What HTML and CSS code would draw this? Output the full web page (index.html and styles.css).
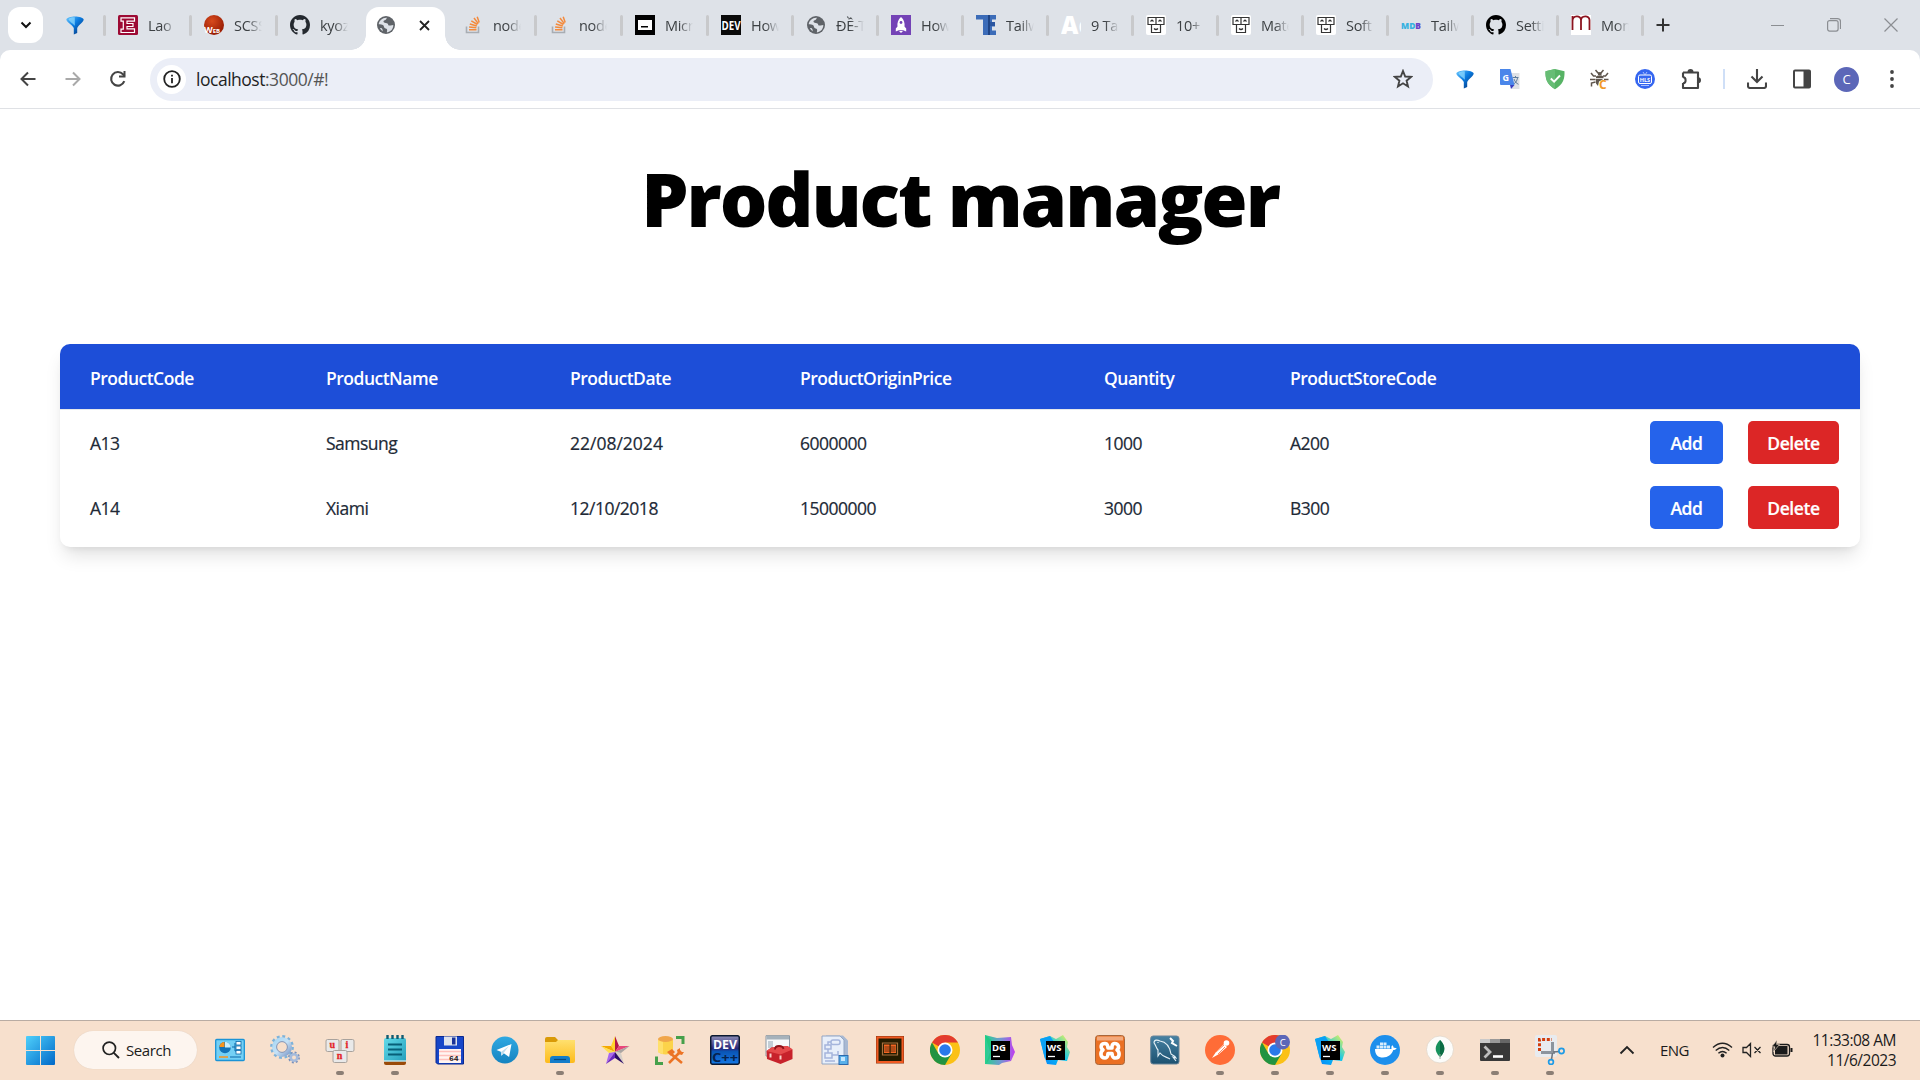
FILE: index.html
```html
<!DOCTYPE html>
<html lang="en">
<head>
<meta charset="utf-8">
<title>Product manager</title>
<link rel="stylesheet" href="styles.css">
</head>
<body>
<svg class="defs" aria-hidden="true">
  <defs>
    <linearGradient id="blueV" x1="0" y1="0" x2="1" y2="1"><stop offset="0" stop-color="#6cc8ff"/><stop offset=".45" stop-color="#0a7be0"/><stop offset="1" stop-color="#062a6c"/></linearGradient>
    <linearGradient id="win" gradientUnits="userSpaceOnUse" x1="0" y1="0" x2="29" y2="29"><stop offset="0" stop-color="#4fd0fb"/><stop offset="1" stop-color="#0068c8"/></linearGradient>
    <linearGradient id="folder" x1="0" y1="0" x2="0" y2="1"><stop offset="0" stop-color="#ffe06e"/><stop offset="1" stop-color="#fdbb1c"/></linearGradient>
    <linearGradient id="tg" x1="0" y1="0" x2="0" y2="1"><stop offset="0" stop-color="#2fa9e2"/><stop offset="1" stop-color="#1583c0"/></linearGradient>
    <linearGradient id="dg" x1="0" y1="0" x2="1" y2="0"><stop offset="0" stop-color="#24d28b"/><stop offset=".5" stop-color="#6f9bd0"/><stop offset="1" stop-color="#c13df0"/></linearGradient>
    <linearGradient id="wsg" x1="0" y1="1" x2="1" y2="0"><stop offset="0" stop-color="#087cfa"/><stop offset=".5" stop-color="#07c3f2"/><stop offset="1" stop-color="#fcf84a"/></linearGradient>
    <linearGradient id="devg" x1="0" y1="0" x2="0" y2="1"><stop offset="0" stop-color="#8f8fb8"/><stop offset=".45" stop-color="#28287a"/><stop offset=".55" stop-color="#0a55b5"/><stop offset="1" stop-color="#1579e6"/></linearGradient>
    <linearGradient id="gear" x1="0" y1="0" x2="1" y2="1"><stop offset="0" stop-color="#a9d7f3"/><stop offset=".5" stop-color="#c5e2f7"/><stop offset="1" stop-color="#829cc9"/></linearGradient>
    <linearGradient id="note" x1="0" y1="0" x2="1" y2="1"><stop offset="0" stop-color="#63dbe9"/><stop offset="1" stop-color="#229cba"/></linearGradient>
    <linearGradient id="sql" x1="0" y1="0" x2="0" y2="1"><stop offset="0" stop-color="#4782a3"/><stop offset="1" stop-color="#1c5170"/></linearGradient>
    <radialGradient id="redball" cx=".4" cy=".3" r=".8"><stop offset="0" stop-color="#d84a1c"/><stop offset="1" stop-color="#8c1400"/></radialGradient>
    <symbol id="funnel" viewBox="0 0 18 20"><path d="M.3 4.500C1.500.4 16.500.4 17.700 4.500c-.3 2.800-4.700 5-6.500 8.500V18l-3.400 1.500V13C6 9.500.6 7.300.3 4.500z" fill="url(#blueV)"/><path d="M2.500 4c1.500-1.800 4.500-2 6.300-1.700v8.500C7 8.300 3 6.500 2.500 4z" fill="#8ed9ff" opacity=".75"/></symbol>
    <symbol id="globe" viewBox="0 0 20 20"><circle cx="10" cy="10" r="9" fill="#5f6368"/><path d="M11 2.700c-1 1-.3 1.700-1.700 2.300-.8.400-1.600.3-1.800 1.300-.1.900.9 1.600 2.200 1.600 1.800 0 2.200.8 2.500 1.800.3.900 1.300 1 2.400.8l2.700-.4c.2 3.600-2.600 7-6.400 7.300 0-1.400.5-2.400.1-3.200-.5-1-1.900-.7-2.600-1.500-.7-.7-.3-1.700-1.200-2.400C6.200 9.500 4.300 9.400 2.700 9.300 3 5.500 6.800 2.200 11 2.700zM4 13.200c1.300-.3 2 .1 2.400 1 .3.900.2 1.500.7 2.200C5.700 15.700 4.700 14.600 4 13.200z" fill="#dee2e8"/></symbol>
    <symbol id="github" viewBox="0 0 16 16"><path d="M8 0C3.580 0 0 3.580 0 8c0 3.540 2.290 6.530 5.470 7.590.4.070.55-.17.55-.38 0-.19-.01-.82-.01-1.490-2.010.37-2.530-.49-2.690-.94-.09-.23-.48-.94-.82-1.130-.28-.15-.68-.52-.01-.53.63-.01 1.080.58 1.230.82.72 1.210 1.870.87 2.330.66.07-.52.28-.87.51-1.070-1.780-.2-3.640-.89-3.640-3.950 0-.87.31-1.590.82-2.150-.08-.2-.36-1.020.08-2.120 0 0 .67-.21 2.200.82.640-.18 1.320-.27 2-.27s1.360.09 2 .27c1.530-1.040 2.200-.82 2.200-.82.44 1.100.16 1.920.08 2.120.51.56.82 1.270.82 2.150 0 3.070-1.870 3.750-3.650 3.950.29.25.54.73.54 1.480 0 1.070-.01 1.930-.01 2.200 0 .21.15.46.55.38A8.010 8.010 0 0 0 16 8c0-4.420-3.580-8-8-8z" fill="currentColor"/></symbol>
    <symbol id="stack" viewBox="0 0 20 20"><path d="M3.500 11.500v6h12v-6" fill="none" stroke="#a8adb3" stroke-width="1.600"/><path d="M6 14.800h7.500M6.100 12l7.300.8M6.800 9l7 2M8.300 5.800l6.200 3.700M11 3l4.300 5.600M14.200 1.800l2 5.600" stroke="#f48a3c" stroke-width="1.500"/></symbol>
    <symbol id="robot" viewBox="0 0 20 20"><rect width="20" height="20" rx="2" fill="#fff"/><g fill="none" stroke="#333" stroke-width="1.200"><path d="M2 2.500h8v7H2zM10 2.500h8v7h-8zM5.500 9.500h9v8h-9z"/><path d="M4.500 6.500l1.500-1.500 1.500 1.500M12.500 6.500l1.500-1.500 1.500 1.500M8 13.500q2 2 4 0"/></g></symbol>
    <symbol id="chrome" viewBox="0 0 30 30"><circle cx="15" cy="15" r="15" fill="#fbc116"/><path d="M15 15L2 7.500A15 15 0 0 1 28 7.500H15z" fill="#e33b2e"/><path d="M2 7.500A15 15 0 0 0 15 30l6.500-11.300L8.500 18.700z" fill="#229342"/><circle cx="15" cy="15" r="7.500" fill="#fff"/><circle cx="15" cy="15" r="5.800" fill="#2a79ea"/></symbol>
    <symbol id="webstorm" viewBox="0 0 30 30"><path d="M0 4l10-3 6 3 7-4 5 7-1 5 3 5-3 9-9-1-2 5-9-1-3-9z" fill="url(#wsg)"/><path d="M0 4l10-3 4 6-9 17z" fill="#0aa0f5"/><rect x="6" y="6" width="19" height="19" fill="#000"/><text x="7" y="15.500" class="ide">WS</text><path d="M8 21.500h7" stroke="#fff" stroke-width="1.300"/></symbol>
  </defs>
</svg>

<header class="tabstrip">
  <button class="tab-search"><svg width="12" height="8" viewBox="0 0 12 8"><path d="M1.500 1.500L6 6l4.500-4.500" fill="none" stroke="#111" stroke-width="2"/></svg></button>
  <div class="tab pinned"><svg width="18" height="20"><use href="#funnel"/></svg></div>
  <div class="tab"><svg width="20" height="20" viewBox="0 0 20 20"><rect width="20" height="20" rx="1.500" fill="#9d0b34"/><path d="M3 2.800h13.500v3.400H9v2.300h6v3H9v2.300h7.500v3.700H3v-3.300h2.300V6.200H3z" fill="none" stroke="#fff" stroke-width="1.200"/></svg><span class="title">Lao</span></div>
  <div class="tab"><svg width="20" height="20" viewBox="0 0 20 20"><circle cx="10" cy="10" r="10" fill="url(#redball)"/><text x="0" y="18" class="fav-web">W<tspan font-size="6">EB</tspan></text></svg><span class="title">SCSS</span></div>
  <div class="tab last-before"><svg class="gh-dark" width="20" height="20"><use href="#github"/></svg><span class="title">kyoz</span></div>
  <div class="tab active"><svg width="20" height="20"><use href="#globe"/></svg><svg width="11" height="11" viewBox="0 0 11 11"><path d="M1 1l9 9M10 1l-9 9" stroke="#222" stroke-width="1.800"/></svg></div>
  <div class="tab after-active"><svg width="20" height="20"><use href="#stack"/></svg><span class="title">node</span></div>
  <div class="tab"><svg width="20" height="20"><use href="#stack"/></svg><span class="title">node</span></div>
  <div class="tab"><svg width="20" height="20" viewBox="0 0 20 20"><path fill="#000" d="M0 0h20v20H0z"/><path fill="#fff" d="M3 5h14v10H3z"/><path fill="#000" d="M6 11h7v1.500H6z"/></svg><span class="title">Micr</span></div>
  <div class="tab narrow"><svg width="20" height="20" viewBox="0 0 20 20"><path fill="#0a0a0a" d="M0 0h20v20H0z"/><text x="0.500" y="14.500" class="fav-dev" textLength="19" lengthAdjust="spacingAndGlyphs">DEV</text></svg><span class="title">How</span></div>
  <div class="tab narrow"><svg width="20" height="20"><use href="#globe"/></svg><span class="title">ĐỀ-T</span></div>
  <div class="tab narrow"><svg width="20" height="20" viewBox="0 0 20 20"><path fill="#7443b6" d="M0 0h20v20H0z"/><path d="M10 2c3 2.500 4 6 3.500 9.500l1.700 2v3l-3-1.200H7.800l-3 1.200v-3l1.700-2C6 8 7 4.500 10 2zM8 16h4l-2 2z" fill="#fff"/><circle cx="10" cy="7.500" r="1.400" fill="#7443b6"/></svg><span class="title">How</span></div>
  <div class="tab narrow"><svg width="20" height="20" viewBox="0 0 20 20"><path d="M0 0h20v4.500h-4v3h3v4h-3v4h4V20H7V4.500H0z" fill="#3c6cb8"/><path d="M12 0h2v20h-2z" fill="#1f4586"/><path d="M14 7h5v4h-5z" fill="#2b56a0"/></svg><span class="title">Tailw</span></div>
  <div class="tab narrow"><svg width="20" height="20" viewBox="0 0 20 20"><text x="0" y="18.500" class="fav-a">Ac</text></svg><span class="title">9 Tai</span></div>
  <div class="tab narrow"><svg width="20" height="20"><use href="#robot"/></svg><span class="title">10+</span></div>
  <div class="tab narrow"><svg width="20" height="20"><use href="#robot"/></svg><span class="title">Mate</span></div>
  <div class="tab narrow"><svg width="20" height="20"><use href="#robot"/></svg><span class="title">Soft</span></div>
  <div class="tab narrow"><svg width="20" height="20" viewBox="0 0 20 20"><text x="0" y="13.500" class="fav-mdb" textLength="20" lengthAdjust="spacingAndGlyphs">MD<tspan fill="#6a42c8">B</tspan></text></svg><span class="title">Tailw</span></div>
  <div class="tab narrow"><svg width="20" height="20"><use href="#github"/></svg><span class="title">Setti</span></div>
  <div class="tab narrow"><svg width="20" height="20" viewBox="0 0 20 20"><path fill="#fff" d="M0 0h20v20H0z"/><path d="M1.500 15V1M1.500 6C1.500 0 10 0 10 5v10M10 5.500C10 0 18.500 0 18.500 5v10" fill="none" stroke="#8c1420" stroke-width="1.800"/></svg><span class="title">Mon</span></div>
  <svg class="new-tab" width="14" height="14" viewBox="0 0 14 14"><path d="M7 .5v13M.5 7h13" stroke="#333" stroke-width="2"/></svg>
  <div class="window-buttons">
    <svg width="14" height="14" viewBox="0 0 14 14"><path d="M1 7.500h13" stroke="#8b8e92"/></svg>
    <svg width="14" height="14" viewBox="0 0 14 14"><g fill="none" stroke="#8b8e92" stroke-width="1.200"><rect x=".6" y="2.600" width="10.500" height="10.500" rx="2"/><path d="M3 .7h7.500a3 3 0 0 1 3 3V11"/></g></svg>
    <svg width="14" height="14" viewBox="0 0 14 14"><path d="M.5.5l13 13M13.500.5l-13 13" stroke="#8b8e92" stroke-width="1.200"/></svg>
  </div>
</header>

<div class="toolbar-back">
<nav class="toolbar">
  <div class="nav-buttons">
    <svg width="20" height="20" viewBox="0 0 20 20"><path d="M17.500 10H4M10 3.500L3.500 10l6.500 6.500" fill="none" stroke="#444" stroke-width="2"/></svg>
    <svg width="20" height="20" viewBox="0 0 20 20"><path d="M2.500 10H16M10 3.500l6.500 6.500-6.500 6.500" fill="none" stroke="#a9a9a9" stroke-width="2"/></svg>
    <svg width="20" height="20" viewBox="0 0 20 20"><path d="M16.300 12.200A6.800 6.800 0 1 1 15 5.300l1.500 1.700" fill="none" stroke="#444" stroke-width="2.100"/><path d="M17.500 2v6.500H11V6.500h4.500V2z" fill="#444"/></svg>
  </div>
  <div class="omnibox">
    <span class="site-info"><svg width="18" height="18" viewBox="0 0 18 18"><circle cx="9" cy="9" r="7.800" fill="none" stroke="#222" stroke-width="1.800"/><path d="M8.100 8h1.800v5.200H8.100zM8.100 4.700h1.800v1.900H8.100z" fill="#222"/></svg></span>
    <span class="url"><b>localhost</b>:3000/#!</span>
    <svg class="star" width="20" height="20" viewBox="0 0 20 20"><path d="M10 2l2.200 5.500 5.900.4-4.500 3.800 1.400 5.800-5-3.200-5 3.200 1.400-5.800L1.900 7.900l5.900-.4z" fill="none" stroke="#444" stroke-width="1.900"/></svg>
  </div>
  <div class="extensions">
    <svg width="18" height="20"><use href="#funnel"/></svg>
    <svg width="22" height="22" viewBox="0 0 22 22"><path d="M9 5h11.500v16H13z" fill="#dfe1e5"/><path d="M13.500 9.500h6M16.500 8v1.500M14.500 16c2-1 3.500-3 4-6M15 11c1 3 2.500 4.300 4.500 5.300" stroke="#5f7d9c" fill="none"/><path d="M1 1h10.500l4 16H1.500L1 16z" fill="#4a86ea"/><path d="M11 17h4.500L12 21z" fill="#3a3fc0"/><text x="3.500" y="12.500" class="g-letter">G</text></svg>
    <svg width="20" height="22" viewBox="0 0 20 22"><path d="M10 1l9.500 2.300c.3 7-1 13-9.500 18C1.500 16.300.2 10.300.5 3.300z" fill="#57b365"/><path d="M10 1v20.300C1.500 16.300.2 10.300.5 3.300z" fill="#67bd75"/><path d="M5.800 10.500l3.300 3.200L15 7.500" fill="none" stroke="#fff" stroke-width="1.900"/></svg>
    <svg width="20" height="20" viewBox="0 0 20 20"><path d="M6 7.500q4-2.500 7.500 0v1.700H6zM5.800 10h7.500L9 12.500 8 17l-2-2.500z" fill="#5f564d"/><path d="M5.500 1l2.500 3h3l2.500-3M1 4l2.500 3H6M18 4l-2.500 3H13M0 10.500h5.500M1.500 17.500V14l4-1M18.500 10.500H14" fill="none" stroke="#5f564d" stroke-width="1.500"/><path d="M8 3.500h3.500V6H8z" fill="#5f564d"/><text x="9" y="19.700" class="c-letter">C</text></svg>
    <svg width="20" height="20" viewBox="0 0 20 20"><circle cx="10" cy="10" r="10" fill="#3566f0"/><rect x="3.500" y="6" width="13" height="8.500" rx="1.500" fill="none" stroke="#fff"/><path d="M8 3l2 3 2-3M6 16.500h8" fill="none" stroke="#c8d6ff" stroke-width=".8"/><text x="4.700" y="12.500" class="hls">HLS</text></svg>
    <svg width="22" height="22" viewBox="0 0 22 22"><path d="M3 4.500h15v5.500M18 14v6H3v-5M3 4.500v5" fill="none" stroke="#444" stroke-width="2.100" stroke-linejoin="round"/><path d="M3 9c3.500.5 3.500 6 0 6.500" fill="none" stroke="#444" stroke-width="2"/><path d="M7.500 4a3 3 0 0 1 6 0zM18 9.200a3 3 0 0 1 0 6z" fill="#444"/><path d="M18 9v6" stroke="#444" stroke-width="2.100"/></svg>
  </div>
  <span class="divider"></span>
  <div class="actions">
    <svg width="20" height="20" viewBox="0 0 20 20"><path d="M10 0v13M4.500 7.500L10 13l5.500-5.500M1 13.500V17q0 2 2 2h14q2 0 2-2v-3.500" fill="none" stroke="#444" stroke-width="2.100"/></svg>
    <svg width="20" height="20" viewBox="0 0 20 20"><rect x="2" y="1.500" width="16" height="17" rx="1" fill="none" stroke="#444" stroke-width="2"/><path d="M11.500 2h6.500v16.500h-6.500z" fill="#444"/></svg>
    <span class="avatar">C</span>
    <svg width="20" height="20" viewBox="0 0 20 20" fill="#444"><circle cx="10" cy="3" r="1.900"/><circle cx="10" cy="10" r="1.900"/><circle cx="10" cy="17" r="1.900"/></svg>
  </div>
</nav>
</div>

<main class="page">
  <h1>Product manager</h1>
  <section class="card">
    <div class="row head">
      <span>ProductCode</span><span>ProductName</span><span>ProductDate</span><span>ProductOriginPrice</span><span>Quantity</span><span>ProductStoreCode</span><span></span>
    </div>
    <div class="row">
      <span>A13</span><span>Samsung</span><span class="wide">22/08/2024</span><span>6000000</span><span>1000</span><span>A200</span>
      <div class="buttons"><button class="btn add">Add</button><button class="btn delete">Delete</button></div>
    </div>
    <div class="row">
      <span>A14</span><span>Xiami</span><span>12/10/2018</span><span>15000000</span><span>3000</span><span>B300</span>
      <div class="buttons"><button class="btn add">Add</button><button class="btn delete">Delete</button></div>
    </div>
  </section>
</main>

<footer class="taskbar">
  <svg class="start" width="29" height="29" viewBox="0 0 29 29"><path d="M0 1q0-1 1-1h13v14H0zM15 0h13q1 0 1 1v13H15zM0 15h14v14H1q-1 0-1-1zM15 15h14v13q0 1-1 1H15z" fill="url(#win)"/></svg>
  <div class="search"><svg width="18" height="18" viewBox="0 0 18 18"><circle cx="7.300" cy="7.300" r="6.200" fill="none" stroke="#222" stroke-width="1.700"/><path d="M11.800 11.800L17 17" stroke="#222" stroke-width="1.900"/></svg><span>Search</span></div>
  <div class="apps">
    <div class="app"><svg width="30" height="30" viewBox="0 0 30 30"><rect x=".7" y="4.500" width="28.600" height="21" rx="1" fill="#74d0f5" stroke="#1a93d6" stroke-width="1.300"/><circle cx="10" cy="12.500" r="5.800" fill="#1273b8"/><path d="M10 12.500V6.700a5.800 5.800 0 0 1 5.800 5.800z" fill="#c9efff"/><path d="M9.500 12V7a5 5 0 0 0-5 5z" fill="#f8941d"/><path d="M4 22h9" stroke="#f8941d" stroke-width="1.500"/><path d="M15 22h11M17 12h3M20 8v8h2" stroke="#0c68a9" fill="none"/><g fill="#fff" stroke="#0c68a9" stroke-width=".8"><rect x="21" y="6.500" width="5" height="3.500"/><rect x="21" y="11" width="5" height="3.500"/><rect x="21" y="15.500" width="5" height="3.500"/></g></svg></div>
    <div class="app"><svg width="30" height="30" viewBox="0 0 30 30"><circle cx="12" cy="12" r="7.800" fill="none" stroke="url(#gear)" stroke-width="4.500"/><circle cx="12" cy="12" r="10.800" fill="none" stroke="#7cb2da" stroke-width="2.200" stroke-dasharray="2.900 2.754"/><circle cx="12" cy="12" r="5.400" fill="none" stroke="#7f94b8"/><circle cx="24" cy="22.500" r="3.300" fill="none" stroke="#a6bbdc" stroke-width="2.600"/><circle cx="24" cy="22.500" r="5.200" fill="none" stroke="#7890bb" stroke-width="1.500" stroke-dasharray="2 2.084"/></svg></div>
    <div class="app open"><svg width="30" height="30" viewBox="0 0 30 30"><g fill="#e9e9e9" stroke="#a8a29d"><rect x="1" y="4.500" width="13" height="12" rx="1.500"/><rect x="16" y="4.500" width="13" height="12" rx="1.500"/><rect x="8" y="15.500" width="14" height="12" rx="1.500"/></g><g class="key"><text x="4.500" y="12.500">u</text><text x="20.500" y="12.500">i</text><text x="11.700" y="23.500">n</text></g></svg></div>
    <div class="app open"><svg width="30" height="30" viewBox="0 0 30 30"><rect x="4" y="3" width="22" height="25" rx="2" fill="url(#note)"/><path d="M4 26.500h22v1.500q0 2-2 2H6q-2 0-2-2z" fill="#9a4a08"/><path d="M4 26h22" stroke="#fff"/><path d="M8 9.500h14M8 14.500h14M8 19.500h14" stroke="#075f78" stroke-width="1.800"/><path d="M7.500 0v4M12.500 0v4M17.500 0v4M22.500 0v4" stroke="#115c72" stroke-width="2.400"/></svg></div>
    <div class="app"><svg width="30" height="30" viewBox="0 0 30 30"><path d="M1 1.500h27.500V29H2.500L1 27.500z" fill="#1746c8" stroke="#0a2890"/><path d="M9 1.500h13v9H9z" fill="#dfe3ec"/><path d="M17 2.500h3.500v7H17z" fill="#1a3298"/><path d="M4 14h22v14H4z" fill="#fff5f2"/><path d="M4 16.500h22M4 20.500h22M4 24.500h22" stroke="#ffc0bc" stroke-width="1.500"/><text x="14" y="26" class="sixty">64</text></svg></div>
    <div class="app"><svg width="30" height="30" viewBox="0 0 30 30"><circle cx="15" cy="15" r="13.500" fill="url(#tg)"/><path d="M6.500 15L21.500 9l-2.400 13-5.300-3.700-2.400 2.400-.6-4z" fill="#fff"/><path d="M11 17l8-6-5.500 7-2.100 2.700z" fill="#bfdcec"/></svg></div>
    <div class="app open"><svg width="30" height="30" viewBox="0 0 30 30"><path d="M0 4q0-2 2-2h8l3 3H30v6H0z" fill="#d99a07"/><path d="M0 7h11l2-2h17v21q0 2-2 2H2q-2 0-2-2z" fill="url(#folder)"/><path d="M5 28v-4q0-3 3-3h14q3 0 3 3v4z" fill="#147dca"/><path d="M9 24.500h12" stroke="#084b82" stroke-width="1.200"/></svg></div>
    <div class="app"><svg width="30" height="30" viewBox="0 0 30 30"><path d="M15 1v16L11 11z" fill="#ffd52b"/><path d="M15 1l4 10-4 6z" fill="#b31648"/><path d="M1 11h10l4 6z" fill="#f5a800"/><path d="M1 11l8 7 6-1z" fill="#ffe04b"/><path d="M19 11h10.500L15 17z" fill="#e8477a"/><path d="M29.500 11L21 18l-6-1z" fill="#aaa5a2"/><path d="M15 17l-6 1-3 11z" fill="#a866f0"/><path d="M6 29l9-6v-6z" fill="#6827bd"/><path d="M15 17l6 1 3 11z" fill="#d5cec6"/><path d="M15 17v6l9 6z" fill="#2a0b68"/></svg></div>
    <div class="app"><svg width="30" height="30" viewBox="0 0 30 30"><path d="M3 4v13q7.500 5 15 0V4z" fill="#fcd34a"/><path d="M3 4v13q2 2 5 2V4z" fill="#ffe06c"/><ellipse cx="10.500" cy="4" rx="7.500" ry="3" fill="#f0a64b"/><path d="M21 2.500h7V9M1.500 21.500v7H8" fill="none" stroke="#46a04b" stroke-width="3"/><path d="M14 28l12-12M15 18l12 10" stroke="#ec7426" stroke-width="2.600"/><path d="M12 17l5-3 3 3-4 4zM22 15l3-2v4h4l-2 3-4-1z" fill="#ec7426"/></svg></div>
    <div class="app"><svg width="30" height="30" viewBox="0 0 30 30"><rect x=".7" y=".7" width="28.600" height="28.600" rx="2" fill="url(#devg)" stroke="#0b1830" stroke-width="1.500"/><text x="3" y="14" class="dev1" textLength="24" lengthAdjust="spacingAndGlyphs">DEV</text><text x="2" y="26.500" class="dev2" textLength="26" lengthAdjust="spacingAndGlyphs">C++</text></svg></div>
    <div class="app"><svg width="30" height="30" viewBox="0 0 30 30"><path d="M1 .7h23.500V21H1z" fill="#f7f9fa" stroke="#8c98a2"/><path d="M1.500 1h22.500v3.500H1.500z" fill="#a6b2bb"/><path d="M3 6h5v7H3z" fill="#c3ced6"/><path d="M1.500 16l5-3.500 16-1.500 5 3.500v9.500l-12 5L2 24z" fill="#c7222b"/><path d="M1.500 16l14 3.500 12-5-5-3.500-16 1.500z" fill="#e54a4b"/><path d="M10 14.500q0-3.500 4-3.500t4.500 3" fill="none" stroke="#8e1219" stroke-width="1.800"/><path d="M5.500 18.500v4M15.500 20.500v4" stroke="#f7d0c8" stroke-width="2"/></svg></div>
    <div class="app"><svg width="30" height="30" viewBox="0 0 30 30"><path d="M6 .5h17l5 5V27H6z" fill="#a9b9d2"/><path d="M2 1h18l4 4v24H2z" fill="#e8effa" stroke="#93a6c4"/><g fill="none" stroke="#a5b5dc" stroke-width="1.500"><rect x="11" y="5" width="9" height="4.500" rx="2"/><rect x="5" y="10" width="6" height="4"/><rect x="5" y="18" width="7" height="5"/><path d="M11 7H8v3M8 14v4M12 20h6v-4M5 26h10"/></g><rect x="19" y="20.500" width="9" height="9" fill="#58b0ea" stroke="#2a69ad"/><path d="M21 22h4v4h-4z" fill="#c5e7ff"/></svg></div>
    <div class="app"><svg width="30" height="30" viewBox="0 0 30 30"><rect x="1" y="1" width="28" height="27.500" fill="#8a3311"/><rect x="2.500" y="2.500" width="25" height="24.500" fill="#251c00" stroke="#f15a22" stroke-width="2"/><path d="M7.500 8h15v12h-15z" fill="none" stroke="#a8713e" stroke-width="1.200"/><path d="M9 9.500h5.500V18H9zM15.700 9.500H21V18h-5.300z" fill="#f26522"/><path d="M9.500 12h11M9.500 14h11M9.500 16h11" stroke="#4a260b" stroke-width=".8"/></svg></div>
    <div class="app"><svg width="30" height="30"><use href="#chrome"/></svg></div>
    <div class="app"><svg width="30" height="30" viewBox="0 0 30 30"><path d="M0 0l12 3 14-1 1 8 3 7-4 9-9 2-3 2-14-1z" fill="url(#dg)"/><path d="M0 0l10 8-5 15-4 6 4-12z" fill="#21c983"/><rect x="6" y="6" width="19" height="19" fill="#000"/><text x="7" y="15.500" class="ide">DG</text><path d="M8 21.500h7" stroke="#fff" stroke-width="1.300"/></svg></div>
    <div class="app"><svg width="30" height="30"><use href="#webstorm"/></svg></div>
    <div class="app"><svg width="30" height="30" viewBox="0 0 30 30"><rect x=".5" y=".5" width="29" height="29" rx="3" fill="#eb7023" stroke="#a8663a"/><path d="M2 1.500h26v4H2z" fill="#fff" opacity=".4"/><path d="M10 8.500c-5 0-4.500 4.500-2 6.500-3 2-3 8 2 8 3 0 3-4.500 3-4.500h4s0 4.500 3.500 4.500c4.500 0 4.500-6 1.500-8 2.500-2 2-6.500-2.500-6.500-3 0-2.500 4.500-2.500 4.500h-4s0-4.500-3-4.500z" fill="none" stroke="#fff" stroke-width="3.600" stroke-linejoin="round"/></svg></div>
    <div class="app"><svg width="30" height="30" viewBox="0 0 30 30"><rect x=".7" y="1" width="28.300" height="28" rx="2.500" fill="url(#sql)" stroke="#69859a"/><path d="M4 8c0-4 4-3 6-2 7 1 10 7 11 13 2 1 4 2 5 4l-3-1 3 4M4 8c2 2 2 5 4 7v6l2-3c3 4 7 4 10 6M8 7v1" fill="none" stroke="#e6f1f7" stroke-width="1.100"/><path d="M20 3l3 3-1 2 5 3" fill="none" stroke="#fff" stroke-width="2"/></svg></div>
    <div class="app open"><svg width="30" height="30" viewBox="0 0 30 30"><circle cx="15" cy="15" r="15" fill="#ff6c37"/><path d="M7 23l4-6 8-8 3 3-8 7z" fill="#fff"/><path d="M11 17l8-7M13 19l7-7" stroke="#ff8e64"/><circle cx="21.500" cy="8" r="2.800" fill="#fff"/></svg></div>
    <div class="app open"><svg width="30" height="30" viewBox="0 0 30 30"><use href="#chrome"/><circle cx="22.500" cy="7" r="7.500" fill="#5c67b8"/><text x="19.700" y="10.500" class="mini-c">C</text></svg></div>
    <div class="app open"><svg width="30" height="30"><use href="#webstorm"/></svg></div>
    <div class="app open"><svg width="30" height="30" viewBox="0 0 30 30"><circle cx="15" cy="15" r="15" fill="#1d8fec"/><path d="M5 14h16.500c0-1.500-.5-2.500.7-3.800 1 .8 1.400 1.700 1.500 2.600 1-.2 2 0 3 .5-.6 1.200-1.900 1.800-3.400 1.800C21.500 20 18 22.500 13 22.500 8 22.500 5 20 5 14z" fill="#fff"/><path d="M6.500 10.500h3v3h-3zM10 10.500h3v3h-3zM13.500 10.500h3v3h-3zM17 10.500h3v3h-3zM10 7.500h3v2.600h-3zM13.500 7.500h3v2.600h-3z" fill="#d7ecfb"/></svg></div>
    <div class="app open"><svg width="30" height="30" viewBox="0 0 30 30"><circle cx="15" cy="14.500" r="13.500" fill="#fcfcfa" stroke="#ded2c6" stroke-width=".7"/><path d="M15 5c5.500 5.500 6 11.500 0 17-6-5.500-5.500-11.500 0-17z" fill="#17915c"/><path d="M15 5c5.500 5.500 6 11.500 0 17z" fill="#0b6b43"/><path d="M15 19v5" stroke="#98aaa0"/></svg></div>
    <div class="app open"><svg width="30" height="30" viewBox="0 0 30 30"><rect y="4" width="30" height="22" rx="1" fill="#383838"/><path d="M0 4h10v4H0z" fill="#c9c9c9"/><path d="M10 4h10v4H10z" fill="#999"/><path d="M20 4h10v4H20z" fill="#666"/><path d="M4.500 11.500l5.500 5.500-5.500 5.500" fill="none" stroke="#bdbdbd" stroke-width="2.800"/><path d="M13 21.500h10" stroke="#fff" stroke-width="2.600"/></svg></div>
    <div class="app open"><svg width="30" height="30" viewBox="0 0 30 30"><rect x="0" y="0" width="22" height="22" rx="2" fill="#e8ebef"/><path d="M4.500 16V4.500H17" fill="none" stroke="#d23d0c" stroke-width="3" stroke-dasharray="3 1.700"/><path d="M6 17.500h14M17.500 7v12" fill="none" stroke="#8c949d" stroke-width="3"/><path d="M18 17l6.500-.5M17.500 18l-1 6.500" stroke="#6d767f" stroke-width="1.600"/><circle cx="26.500" cy="16" r="2.600" fill="none" stroke="#1f9be6" stroke-width="1.700"/><circle cx="16" cy="27" r="2.400" fill="none" stroke="#1f9be6" stroke-width="1.700"/></svg></div>
  </div>
  <div class="tray">
    <svg class="caret" width="16" height="10" viewBox="0 0 16 10"><path d="M1.500 8.500L8 2l6.500 6.500" fill="none" stroke="#222" stroke-width="1.800"/></svg>
    <span class="lang">ENG</span>
    <svg class="wifi" width="21" height="16" viewBox="0 0 21 16"><g fill="none" stroke="#222" stroke-width="1.400"><path d="M1 5.500q9.500-8.500 19 0M3.700 8.500q6.800-6 13.600 0M6.400 11.300q4.100-3.600 8.200 0"/></g><circle cx="10.500" cy="13.500" r="2" fill="#222"/></svg>
    <svg class="mute" width="20" height="16" viewBox="0 0 20 16"><path d="M1 5.500h3.500L8.500 1.500v13l-4-4H1zM12.500 5l6 6M18.500 5l-6 6" fill="none" stroke="#222" stroke-width="1.300"/></svg>
    <svg class="battery" width="21" height="17" viewBox="0 0 21 17"><rect x="1" y="4.500" width="16.500" height="11.500" rx="2.500" fill="none" stroke="#1a1a1a" stroke-width="1.300"/><path d="M3 6h12.500v8.500H3zM18.500 8h2v4h-2z" fill="#1a1a1a"/><path d="M5 0L-.2 6.800h3L1.500 11.700 7.500 4.500H4.600z" fill="#1a1a1a" stroke="#f7e0cd" stroke-width=".6"/></svg>
    <div class="clock"><span>11:33:08 AM</span><span>11/6/2023</span></div>
  </div>
</footer>
</body>
</html>
```
FILE: styles.css
```css
* { box-sizing: border-box; }
body {
  margin: 0;
  width: 1920px;
  height: 1080px;
  overflow: hidden;
  display: flex;
  flex-direction: column;
  background: #fff;
  font-family: "Open Sans", "Noto Sans", sans-serif;
}
svg { display: block; flex: none; }
button { font: inherit; border: 0; padding: 0; }
.defs { position: absolute; width: 0; height: 0; }

/* Tab strip */
.tabstrip {
  height: 50px;
  flex: none;
  display: flex;
  align-items: center;
  background: #dee2e8;
  padding-left: 8px;
}
.tab-search {
  width: 35px;
  height: 36px;
  border-radius: 12px;
  background: #fff;
  display: flex;
  align-items: center;
  justify-content: center;
  margin-right: 6px;
}
.tab {
  position: relative;
  width: 86px;
  height: 50px;
  flex: none;
  display: flex;
  align-items: center;
  gap: 10px;
  padding-left: 12px;
}
.tab::after {
  content: "";
  position: absolute;
  right: 0;
  top: 15px;
  width: 3px;
  height: 21px;
  border-radius: 2px;
  background: #c8c9cb;
}
.tab.narrow { width: 85px; }
.tab.pinned { width: 57px; padding-left: 17px; }
.tab.last-before { width: 88px; }
.tab.last-before::after { display: none; }
.title {
  width: 28px;
  overflow: hidden;
  white-space: nowrap;
  font-size: 14.500px;
  letter-spacing: -0.3px;
  color: #3c4043;
  -webkit-mask-image: linear-gradient(90deg, #000 50%, transparent 100%);
  mask-image: linear-gradient(90deg, #000 50%, transparent 100%);
}
.gh-dark { color: #24292f; }
.tab.active {
  width: 79px;
  height: 43px;
  align-self: flex-end;
  background: #fff;
  border-radius: 13px 13px 0 0;
  padding: 0 15px 7px 10px;
  justify-content: space-between;
}
.tab.active::before, .tab.active::after {
  content: "";
  position: absolute;
  top: auto;
  bottom: 0;
  width: 15px;
  height: 15px;
  border-radius: 0;
}
.tab.active::before { left: -15px; background: radial-gradient(circle at 0 0, transparent 14.500px, #fff 15px); }
.tab.active::after { right: -15px; background: radial-gradient(circle at 100% 0, transparent 14.500px, #fff 15px); }
.tab.after-active { width: 92px; padding-left: 18px; }
.new-tab { margin-left: 12px; }
.window-buttons { display: flex; gap: 43px; margin-left: auto; margin-right: 22px; }
.fav-web { font: 700 9px "Open Sans", sans-serif; fill: #fff; }
.fav-dev { font: 700 12px "Open Sans", sans-serif; fill: #fff; }
.fav-a { font: 800 24px "Open Sans", sans-serif; fill: #fff; }
.fav-mdb { font: 800 9px "Open Sans", sans-serif; fill: #38b2e0; }

/* Toolbar */
.toolbar-back { flex: none; background: #dee2e8; }
.toolbar {
  height: 59px;
  display: flex;
  align-items: center;
  background: #fff;
  border-bottom: 1px solid #dfe1e5;
  border-radius: 10px 10px 0 0;
  padding-left: 18px;
}
.nav-buttons { display: flex; gap: 25px; width: 132px; }
.omnibox {
  width: 1283px;
  height: 43px;
  border-radius: 22px;
  background: #ebeef7;
  display: flex;
  align-items: center;
  padding: 0 20px 0 7px;
}
.site-info {
  width: 29px;
  height: 29px;
  border-radius: 50%;
  background: #fff;
  display: flex;
  align-items: center;
  justify-content: center;
}
.url { margin-left: 10px; font-size: 17.500px; letter-spacing: -0.480px; color: #555; }
.url b { font-weight: 400; color: #1f1f1f; }
.star { margin-left: auto; }
.extensions { display: grid; grid-template-columns: repeat(6, 45.200px); justify-items: center; align-items: center; margin-left: 9px; }
.divider { width: 2px; height: 20px; background: #cfdff7; margin-left: 10px; }
.actions { display: grid; grid-template-columns: repeat(4, 45px); justify-items: center; align-items: center; margin-left: 9px; }
.avatar {
  width: 25px;
  height: 25px;
  border-radius: 50%;
  background: #5c67b8;
  color: #fff;
  font-size: 13px;
  line-height: 25px;
  text-align: center;
}
.g-letter { font: 700 9px "Open Sans", sans-serif; fill: #fff; }
.c-letter { font: 700 12px "Open Sans", sans-serif; fill: #f29a27; }
.hls { font: 700 5.500px "Open Sans", sans-serif; fill: #fff; }

/* Page */
.page { flex: 1; padding: 0 60px; }
h1 {
  margin: 0;
  height: 235px;
  padding-top: 39px;
  text-align: center;
  font-size: 75px;
  line-height: 100px;
  font-weight: 800;
  letter-spacing: -2.100px;
  color: #000;
}
.card {
  height: 203px;
  border-radius: 10px;
  overflow: hidden;
  background: #fff;
  box-shadow: 0 12px 19px -4px rgba(0, 0, 0, .12), 0 5px 8px -5px rgba(0, 0, 0, .1);
}
.row {
  height: 65px;
  display: grid;
  grid-template-columns: 236px 244px 230px 304px 186px 360px 1fr;
  align-items: center;
  padding-left: 30px;
  padding-top: 3px;
  font-size: 17.500px;
  font-weight: 500;
  letter-spacing: -0.500px;
  color: #212936;
  -webkit-text-stroke: 0.2px currentColor;
}
.row.head { background: #1d4ed8; color: #fff; font-weight: 600; box-shadow: 0 1px 0 #e5e7eb; padding-top: 2px; -webkit-text-stroke: 0; }
.wide { letter-spacing: 0; }
.buttons { display: flex; gap: 25px; }
.btn {
  height: 43px;
  margin-top: -1px;
  padding-top: 1px;
  border-radius: 5px;
  color: #fff;
  font-weight: 600;
  letter-spacing: -0.400px;
}
.add { width: 73px; background: #2563eb; }
.delete { width: 91px; background: #dc2626; }

/* Taskbar */
.taskbar {
  height: 60px;
  flex: none;
  display: flex;
  align-items: center;
  background: #f7e0cd;
  border-top: 1px solid #b9aca3;
  padding: 0 0 1px 26px;
  color: #1b1b1b;
}
.search {
  width: 123px;
  height: 38px;
  margin-left: 19px;
  border-radius: 19px;
  background: #fdf5ef;
  box-shadow: 0 0 1px #d8c4b4;
  display: flex;
  align-items: center;
  gap: 6px;
  padding-left: 28px;
  font-size: 15px;
  letter-spacing: -0.400px;
}
.apps { display: grid; grid-template-columns: repeat(25, 55px); margin-left: 5px; }
.app { position: relative; height: 58px; display: flex; align-items: center; justify-content: center; }
.open::after {
  content: "";
  position: absolute;
  bottom: 4px;
  width: 8px;
  height: 4px;
  border-radius: 2px;
  background: #8b7e74;
}
.tray { display: flex; align-items: center; flex: 1; padding-left: 42px; }
.lang { width: 30px; margin-left: 25px; font-size: 15px; letter-spacing: -0.600px; }
.wifi { margin-left: 22px; }
.mute { margin-left: 9px; }
.battery { margin-left: 10px; margin-bottom: 3px; }
.clock {
  margin-left: auto;
  margin-right: 24px;
  display: flex;
  flex-direction: column;
  align-items: flex-end;
  font-size: 15.500px;
  line-height: 20px;
  letter-spacing: -0.500px;
  white-space: nowrap;
}
.ide { font: 700 9.500px "Open Sans", sans-serif; fill: #fff; }
.key text { font: 700 10px "Liberation Serif", serif; fill: #e3262b; stroke: #e3262b; stroke-width: .3px; }
.sixty { font: 700 8px "Liberation Mono", monospace; fill: #222; }
.dev1 { font: 700 11.500px "Open Sans", sans-serif; fill: #fff; }
.dev2 { font: 700 12.500px "Open Sans", sans-serif; fill: #06234f; }
.mini-c { font: 400 9.500px "Open Sans", sans-serif; fill: #fff; }
```
